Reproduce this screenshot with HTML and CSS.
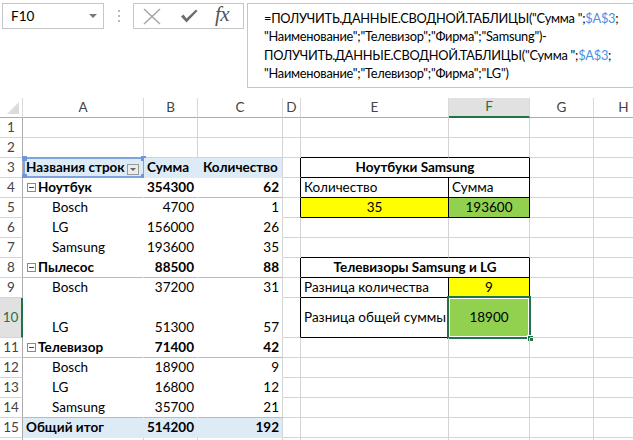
FILE: index.html
```html
<!DOCTYPE html>
<html lang="ru">
<head>
<meta charset="utf-8">
<title>Excel</title>
<link rel="stylesheet" href="styles.css">
</head>
<body>
<div class="app">
  <div class="toolbar">
    <div class="namebox"><span class="nb-text">F10</span><span class="caret"></span></div>
    <div class="dots"><i></i><i></i><i></i></div>
    <div class="btns">
      <svg class="ico x" width="18" height="17" viewBox="0 0 18 17"><path d="M1 1 L17 16 M17 1 L1 16" stroke="#a6a6a6" stroke-width="1.5" fill="none"/></svg>
      <svg class="ico ok" width="18" height="16" viewBox="0 0 18 16"><path d="M1 8.5 L6.5 14.5 L17.5 3 L16 1.5 L6.5 10.5 L3.5 6.5 Z" fill="#6d6d6d"/></svg>
      <span class="fx">fx</span>
    </div>
    <div class="formula">=ПОЛУЧИТЬ.ДАННЫЕ.СВОДНОЙ.ТАБЛИЦЫ("Сумма ";<span class="ref">$A$3</span>;<br>"Наименование";"Телевизор";"Фирма";"Samsung")-<br>ПОЛУЧИТЬ.ДАННЫЕ.СВОДНОЙ.ТАБЛИЦЫ("Сумма ";<span class="ref">$A$3</span>;<br>"Наименование";"Телевизор";"Фирма";"LG")</div>
  </div>

  <div class="sheet">
    <!-- header row -->
    <div class="c hd corner"><span class="tri"></span></div>
    <div class="c hd">A</div>
    <div class="c hd">B</div>
    <div class="c hd">C</div>
    <div class="c hd">D</div>
    <div class="c hd">E</div>
    <div class="c hd sel">F</div>
    <div class="c hd">G</div>
    <div class="c hd">H</div>

    <!-- row 1 -->
    <div class="c rh">1</div>
    <div class="c"></div><div class="c"></div><div class="c"></div><div class="c"></div><div class="c"></div><div class="c"></div><div class="c"></div><div class="c"></div>
    <!-- row 2 -->
    <div class="c rh">2</div>
    <div class="c"></div><div class="c"></div><div class="c"></div><div class="c"></div><div class="c bB"></div><div class="c bB"></div><div class="c"></div><div class="c"></div>
    <!-- row 3 -->
    <div class="c rh">3</div>
    <div class="c pv ph l b">Названия строк<span class="dd"></span><span class="asel"><i class="h1"></i><i class="h2"></i><i class="h3"></i><i class="h4"></i></span></div>
    <div class="c pv ph l b">Сумма</div>
    <div class="c pv ph l b pv-end hc">Количество</div>
    <div class="c bR"></div>
    <div class="c s2 bx ctr b">Ноутбуки Samsung</div>
    <div class="c"></div><div class="c"></div>
    <!-- row 4 -->
    <div class="c rh">4</div>
    <div class="c pv l b bl"><span class="mb"></span>Ноутбук</div>
    <div class="c pv r b bl">354300</div>
    <div class="c pv r b bl pv-end">62</div>
    <div class="c bR"></div>
    <div class="c bx l">Количество</div>
    <div class="c bx l">Сумма</div>
    <div class="c"></div><div class="c"></div>
    <!-- row 5 -->
    <div class="c rh">5</div>
    <div class="c pv l ind">Bosch</div>
    <div class="c pv r">4700</div>
    <div class="c pv r pv-end">1</div>
    <div class="c bR"></div>
    <div class="c bx ctr yel">35</div>
    <div class="c bx ctr grn">193600</div>
    <div class="c"></div><div class="c"></div>
    <!-- row 6 -->
    <div class="c rh">6</div>
    <div class="c pv l ind">LG</div>
    <div class="c pv r">156000</div>
    <div class="c pv r pv-end">26</div>
    <div class="c"></div><div class="c"></div><div class="c"></div><div class="c"></div><div class="c"></div>
    <!-- row 7 -->
    <div class="c rh">7</div>
    <div class="c pv l ind">Samsung</div>
    <div class="c pv r">193600</div>
    <div class="c pv r pv-end">35</div>
    <div class="c"></div><div class="c bB"></div><div class="c bB"></div><div class="c"></div><div class="c"></div>
    <!-- row 8 -->
    <div class="c rh">8</div>
    <div class="c pv l b bl"><span class="mb"></span>Пылесос</div>
    <div class="c pv r b bl">88500</div>
    <div class="c pv r b bl pv-end">88</div>
    <div class="c bR"></div>
    <div class="c s2 bx ctr b">Телевизоры Samsung и LG</div>
    <div class="c"></div><div class="c"></div>
    <!-- row 9 -->
    <div class="c rh">9</div>
    <div class="c pv l ind">Bosch</div>
    <div class="c pv r">37200</div>
    <div class="c pv r pv-end">31</div>
    <div class="c bR"></div>
    <div class="c bx l">Разница количества</div>
    <div class="c bx ctr yel">9</div>
    <div class="c"></div><div class="c"></div>
    <!-- row 10 -->
    <div class="c rh selr">10</div>
    <div class="c pv l ind bot">LG</div>
    <div class="c pv r bot">51300</div>
    <div class="c pv r bot pv-end">57</div>
    <div class="c bR"></div>
    <div class="c bx l">Разница общей суммы</div>
    <div class="c bx ctr grn active">18900<span class="fsel"><i class="fh"></i></span></div>
    <div class="c"></div><div class="c"></div>
    <!-- row 11 -->
    <div class="c rh">11</div>
    <div class="c pv l b bl"><span class="mb"></span>Телевизор</div>
    <div class="c pv r b bl">71400</div>
    <div class="c pv r b bl pv-end">42</div>
    <div class="c"></div><div class="c"></div><div class="c"></div><div class="c"></div><div class="c"></div>
    <!-- row 12 -->
    <div class="c rh">12</div>
    <div class="c pv l ind">Bosch</div>
    <div class="c pv r">18900</div>
    <div class="c pv r pv-end">9</div>
    <div class="c"></div><div class="c"></div><div class="c"></div><div class="c"></div><div class="c"></div>
    <!-- row 13 -->
    <div class="c rh">13</div>
    <div class="c pv l ind">LG</div>
    <div class="c pv r">16800</div>
    <div class="c pv r pv-end">12</div>
    <div class="c"></div><div class="c"></div><div class="c"></div><div class="c"></div><div class="c"></div>
    <!-- row 14 -->
    <div class="c rh">14</div>
    <div class="c pv l ind bl">Samsung</div>
    <div class="c pv r bl">35700</div>
    <div class="c pv r bl pv-end">21</div>
    <div class="c"></div><div class="c"></div><div class="c"></div><div class="c"></div><div class="c"></div>
    <!-- row 15 -->
    <div class="c rh">15</div>
    <div class="c pv ph l b">Общий итог</div>
    <div class="c pv ph r b">514200</div>
    <div class="c pv ph r b pv-end">192</div>
    <div class="c"></div><div class="c"></div><div class="c"></div><div class="c"></div><div class="c"></div>
    <!-- row 16 (cut off by window) -->
    <div class="c rh"></div>
    <div class="c"></div><div class="c"></div><div class="c"></div><div class="c"></div><div class="c"></div><div class="c"></div><div class="c"></div><div class="c"></div>
  </div>
</div>
</body>
</html>
```

FILE: styles.css
```css
* { box-sizing: border-box; }
html, body { margin: 0; padding: 0; background: #fff; }
body { width: 633px; height: 440px; overflow: hidden; font-family: Lato, "Open Sans", sans-serif; font-size: 13.5px; color: #000; }

.app { width: 633px; }

.toolbar {
  height: 98px;
  display: flex;
  align-items: flex-start;
  padding-top: 3px;
  padding-left: 2px;
}
.namebox {
  width: 102px; height: 26px;
  border: 1px solid #c6c6c6;
  display: flex; align-items: center; justify-content: space-between;
  padding: 0 6px 0 8px;
  font-size: 13.5px;
}
.caret { width: 0; height: 0; border-left: 4px solid transparent; border-right: 4px solid transparent; border-top: 4px solid #777; }
.dots { width: 29px; height: 26px; display: flex; flex-direction: column; align-items: center; justify-content: center; gap: 3px; }
.dots i { width: 2px; height: 2px; background: #b9b9b9; display: block; }
.btns {
  width: 111px; height: 26px;
  border: 1px solid #c6c6c6;
  display: flex; align-items: center;
  padding: 0 0 0 9px;
}
.ico { display: block; flex: none; }
.ico.ok { margin-left: 19px; }
.fx { margin-left: 17px; font-family: "Liberation Serif", serif; font-style: italic; font-size: 21px; color: #555; letter-spacing: -0.5px; line-height: 1; margin-top: -3px; }
.formula {
  margin-left: 3px;
  flex: 1;
  height: 85px;
  border: 1px solid #c6c6c6;
  border-right: none;
  padding: 5px 0 0 16px;
  line-height: 18.3px;
  font-size: 12.8px;
  letter-spacing: -0.25px;
  white-space: nowrap;
  overflow: hidden;
}
.ref { color: #4a8ee6; }

.sheet {
  display: grid;
  grid-template-columns: 23px 121px 54px 85px 18px 148px 81px 64px 60px;
  grid-template-rows: 20px repeat(9, 20px) 40px repeat(6, 20px);
}
.c {
  border-right: 1px solid #d4d4d4;
  border-bottom: 1px solid #d4d4d4;
  display: flex; align-items: center;
  white-space: nowrap;
  position: relative;
  line-height: 1;
  padding: 0 3px;
}
.hd {
  justify-content: center;
  color: #444;
  border-bottom-color: #ababab;
  border-right-color: #d9d9d9;
}
.hd.sel { background: #e1e1e1; color: #217346; border-bottom: 2px solid #217346; }
.corner { padding: 0; }
.tri { position: absolute; right: 3px; bottom: 3px; width: 12px; height: 12px; background: #dcdcdc; clip-path: polygon(100% 0, 100% 100%, 0 100%); }
.rh { justify-content: center; color: #444; border-right-color: #ababab; padding: 0; }
.rh.selr { background: #e1e1e1; color: #217346; border-right: 2px solid #217346; }

/* pivot */
.pv { border-right-color: transparent; border-bottom-color: #fff; background: #fff; }
.pv-end { border-right-color: #d4d4d4; }
.pv.ph { background: #ddebf7; border-bottom-color: #ddebf7; }
.pv.ph.pv-end { border-right-color: #d4d4d4; }
.hc { padding-left: 5px; }
.pv.bl { border-bottom-color: #9bc2e6; }
.l { justify-content: flex-start; }
.r { justify-content: flex-end; }
.ctr { justify-content: center; }
.b { font-weight: 700; }
.ind { padding-left: 29px; }
.bot { align-items: flex-end; padding-bottom: 3px; }
.mb { width: 9px; height: 9px; border: 1px solid #8a8a8a; margin: 0 2px 0 1px; position: relative; display: inline-block; flex: none; }
.mb::after { content: ""; position: absolute; left: 1px; right: 1px; top: 3px; height: 1px; background: #444; }
.dd { position: absolute; right: 4px; top: 6px; width: 12px; height: 11px; border: 1px solid #9a9a9a; background: #ebebeb; }
.dd::after { content: ""; position: absolute; left: 2px; top: 3px; border-left: 3px solid transparent; border-right: 3px solid transparent; border-top: 3px solid #666; }
.asel { position: absolute; left: 0; top: -1px; right: -2px; bottom: -1px; border: 2px solid #7fa3dc; pointer-events: none; }
.asel i { position: absolute; width: 5px; height: 5px; background: #6e96d8; }
.asel .h1 { left: -3px; top: -3px; }
.asel .h2 { right: -3px; top: -3px; }
.asel .h3 { left: -3px; bottom: -3px; }
.asel .h4 { right: -3px; bottom: -3px; }

/* boxed tables */
.s2 { grid-column: span 2; }
.bx { border-right-color: #000; border-bottom-color: #000; }
.bR { border-right-color: #000; }
.bB { border-bottom-color: #000; }
.yel { background: #ffff00; }
.grn { background: #92d050; }
.fsel { position: absolute; left: -2px; top: -2px; right: -2px; bottom: -2px; border: 2px solid #217346; box-shadow: inset 0 0 0 1px #fff; }
.fh { position: absolute; right: -5px; bottom: -5px; width: 7px; height: 7px; background: #217346; border: 1px solid #fff; }
```
